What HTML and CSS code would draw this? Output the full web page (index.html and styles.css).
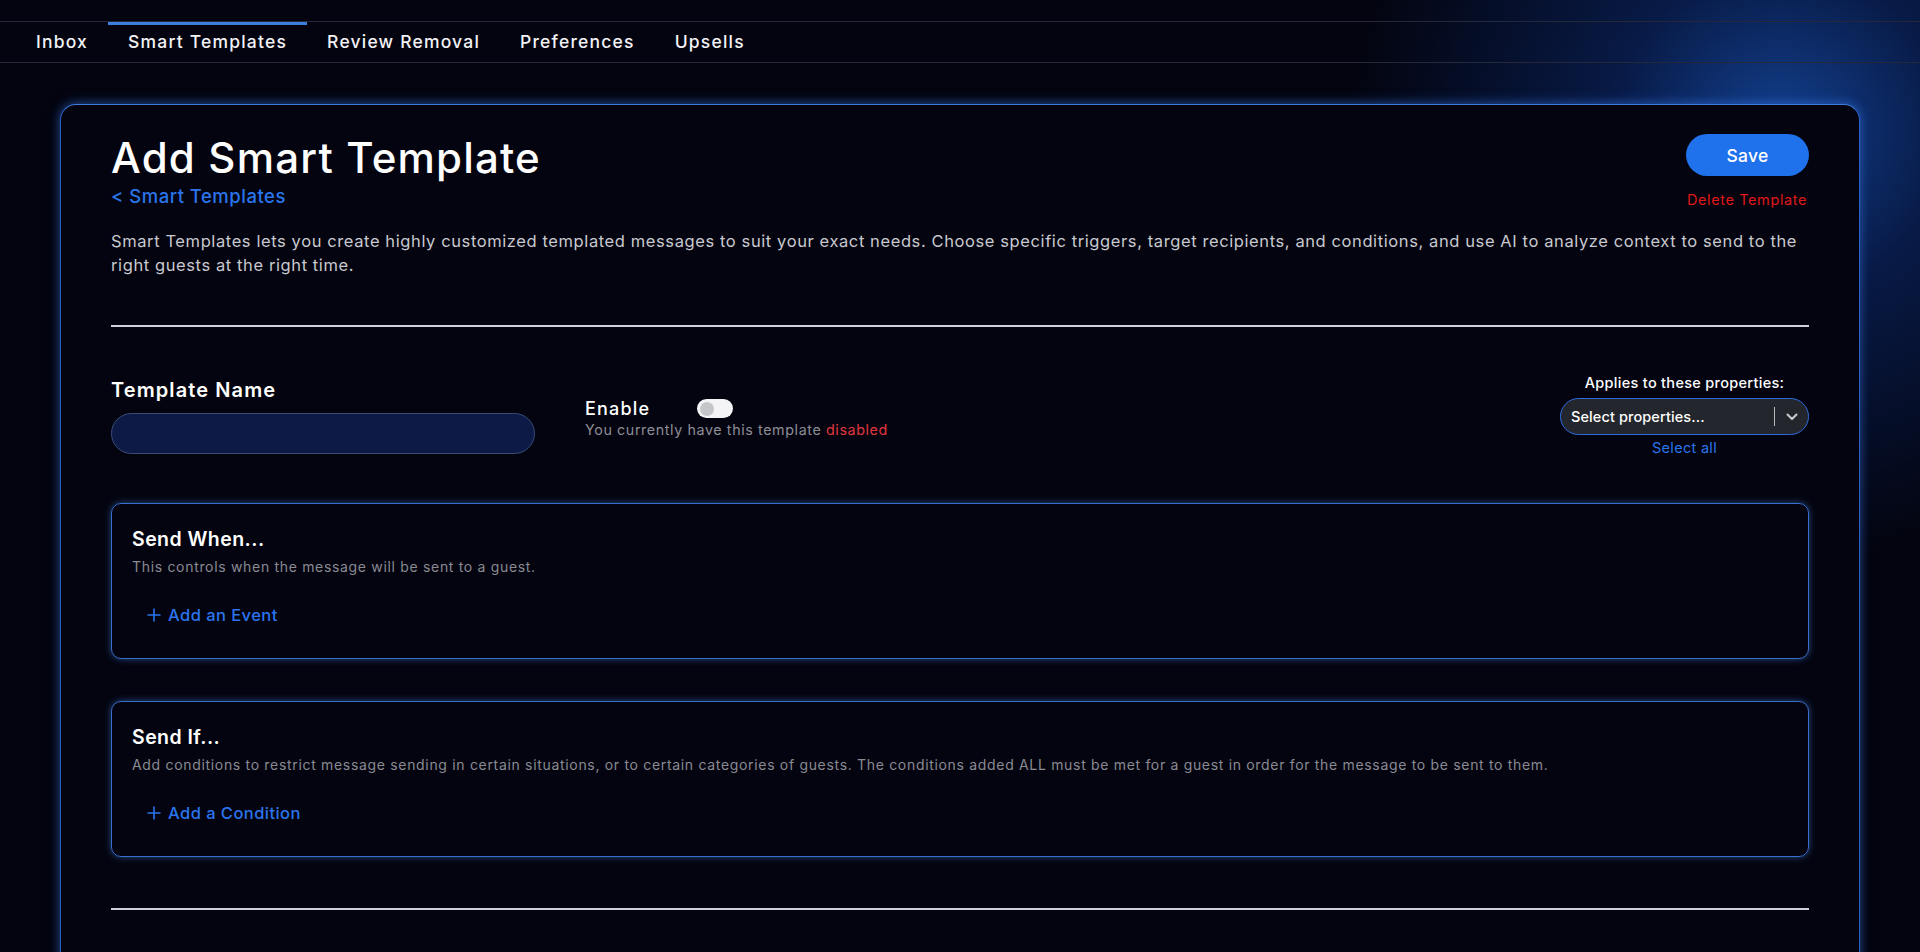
FILE: index.html
```html
<!DOCTYPE html>
<html lang="en">
<head>
<meta charset="utf-8">
<title>Add Smart Template</title>
<link rel="stylesheet" href="styles.css">
</head>
<body>
<div class="topspace"></div>
<nav class="tabs">
  <a class="tab">Inbox</a>
  <a class="tab active">Smart Templates</a>
  <a class="tab">Review Removal</a>
  <a class="tab">Preferences</a>
  <a class="tab">Upsells</a>
</nav>
<main class="card">
  <header class="card-head">
    <div class="head-left">
      <h1 class="title">Add Smart Template</h1>
      <a class="back">&lt; Smart Templates</a>
    </div>
    <div class="head-right">
      <button class="save">Save</button>
      <a class="delete">Delete Template</a>
    </div>
  </header>
  <p class="intro">Smart Templates lets you create highly customized templated messages to suit your exact needs. Choose specific triggers, target recipients, and conditions, and use AI to analyze context to send to the right guests at the right time.</p>
  <hr class="sep">
  <section class="form-row">
    <div class="name-col">
      <label class="field-label">Template Name</label>
      <div class="name-input"></div>
    </div>
    <div class="enable-col">
      <div class="enable-line">
        <span class="enable-label">Enable</span>
        <span class="toggle"><span class="knob"></span></span>
      </div>
      <div class="status">You currently have this template <span class="status-off">disabled</span></div>
    </div>
    <div class="props-col">
      <div class="props-label">Applies to these properties:</div>
      <div class="select">
        <span class="select-text">Select properties...</span>
        <span class="select-sep"></span>
        <svg class="chev" width="12" height="8" viewBox="0 0 12 8"><path d="M1.5 1.5 L6 6 L10.5 1.5" fill="none" stroke="#c9cacf" stroke-width="2" stroke-linecap="round" stroke-linejoin="round"/></svg>
      </div>
      <a class="select-all">Select all</a>
    </div>
  </section>
  <section class="rule-box">
    <h2 class="rule-title">Send When...</h2>
    <p class="rule-desc">This controls when the message will be sent to a guest.</p>
    <a class="rule-add"><svg class="plus" width="14" height="14" viewBox="0 0 14 14"><path d="M7 1 V13 M1 7 H13" stroke="#2b74ee" stroke-width="1.6" stroke-linecap="round"/></svg>Add an Event</a>
  </section>
  <section class="rule-box second">
    <h2 class="rule-title">Send If...</h2>
    <p class="rule-desc">Add conditions to restrict message sending in certain situations, or to certain categories of guests. The conditions added ALL must be met for a guest in order for the message to be sent to them.</p>
    <a class="rule-add"><svg class="plus" width="14" height="14" viewBox="0 0 14 14"><path d="M7 1 V13 M1 7 H13" stroke="#2b74ee" stroke-width="1.6" stroke-linecap="round"/></svg>Add a Condition</a>
  </section>
  <hr class="sep last">
</main>
</body>
</html>
```
FILE: styles.css
```css
* { box-sizing: border-box; }
html, body { height: 100%; }
body {
  margin: 0;
  background-color: #03040f;
  background-image: radial-gradient(circle at 1780px 130px, rgba(28, 100, 220, 0.62) 0, rgba(16, 64, 165, 0.36) 170px, rgba(6, 20, 60, 0) 430px);
  background-repeat: no-repeat;
  font-family: Inter, "Open Sans", sans-serif;
  color: #ffffff;
  overflow: hidden;
}
.topspace { height: 21px; }
.tabs {
  display: flex;
  height: 42px;
  padding-left: 16px;
  border-top: 1px solid #25283a;
  border-bottom: 1px solid #25283a;
}
.tab {
  display: flex;
  align-items: center;
  padding: 0 20px 5px;
  font-size: 17.5px;
  font-weight: 500;
  color: #f2f2f6;
  border-top: 3px solid transparent;
  letter-spacing: 1.2px;
}
.tab.active { border-top-color: #3d7fdc; }

.card {
  margin: 41px 60px 0;
  padding: 29px 50px 60px;
  border: 1px solid #2c5fc4;
  border-top-color: #3f7ade;
  border-radius: 16px 16px 0 0;
  background: #03040f;
  box-shadow: 0 0 10px rgba(58, 120, 230, 0.45), 0 -2px 14px rgba(58, 120, 230, 0.25);
  min-height: 900px;
}
.card-head {
  display: flex;
  justify-content: space-between;
  align-items: flex-start;
  height: 76px;
}
.head-left { display: flex; flex-direction: column; }
.title {
  margin: 0;
  font-size: 42px;
  line-height: 48px;
  font-weight: 500;
  letter-spacing: 1.2px;
}
.back {
  margin-top: 2px;
  font-size: 18.5px;
  line-height: 24px;
  color: #2a74ec;
  font-weight: 500;
  letter-spacing: 0.5px;
}
.head-right { display: flex; flex-direction: column; align-items: flex-end; }
.save {
  width: 123px;
  height: 42px;
  border: none;
  border-radius: 21px;
  background: #1f71ec;
  color: #ffffff;
  font-family: inherit;
  font-size: 17.5px;
  font-weight: 500;
  letter-spacing: 0.3px;
}
.delete {
  margin-top: 14px;
  margin-right: 2px;
  font-size: 14.5px;
  line-height: 20px;
  color: #e01818;
  letter-spacing: 0.6px;
}
.intro {
  margin: 19px 0 0;
  font-size: 16.5px;
  line-height: 24px;
  color: #c9c9d0;
  letter-spacing: 0.6px;
}
.sep {
  margin: 48px 0 0;
  height: 2px;
  border: none;
  background: #cfd0da;
}
.sep.last { margin-top: 51px; }

.form-row {
  display: flex;
  align-items: flex-start;
  margin-top: 46px;
}
.name-col { display: flex; flex-direction: column; padding-top: 5px; width: 424px; }
.field-label {
  font-size: 20px;
  line-height: 24px;
  font-weight: 600;
  letter-spacing: 1.1px;
}
.name-input {
  margin-top: 11px;
  height: 41px;
  border-radius: 21px;
  background: #0c1a45;
  border: 1px solid #3a4c78;
}
.enable-col { margin-left: 50px; padding-top: 24px; }
.enable-line { display: flex; align-items: center; height: 23px; }
.enable-label {
  width: 112px;
  font-size: 18px;
  font-weight: 500;
  letter-spacing: 1.2px;
}
.toggle {
  display: flex;
  align-items: center;
  width: 36px;
  height: 19px;
  padding: 0 3px;
  border-radius: 10px;
  background: #f4f4f6;
}
.knob { width: 14px; height: 14px; border-radius: 50%; background: #c5c6ca; }
.status {
  font-size: 14.3px;
  line-height: 20px;
  color: #8d8d96;
  letter-spacing: 0.6px;
}
.status-off { color: #e3363e; }

.props-col {
  margin-left: auto;
  width: 249px;
  display: flex;
  flex-direction: column;
  align-items: center;
}
.props-label {
  font-size: 14.5px;
  line-height: 20px;
  font-weight: 500;
  letter-spacing: 0.3px;
}
.select {
  margin-top: 5px;
  width: 249px;
  height: 37px;
  display: flex;
  align-items: center;
  padding: 0 10px 0 10px;
  border-radius: 19px;
  background: #23262c;
  border: 1px solid #2d6be0;
}
.select-text { font-size: 14.5px; font-weight: 500; flex: 1; letter-spacing: 0.1px; }
.select-sep { width: 1px; height: 19px; background: #b9bac0; margin-right: 11px; }
.chev { display: block; }
.select-all {
  margin-top: 3px;
  font-size: 14.5px;
  line-height: 20px;
  color: #2a74ec;
  letter-spacing: 0.3px;
}

.rule-box {
  margin-top: 45px;
  padding: 23px 20px 31px;
  border: 1px solid #3a6fcc;
  border-radius: 10px;
  box-shadow: 0 0 7px rgba(70, 130, 230, 0.55);
}
.rule-box.second { margin-top: 42px; }
.rule-title {
  margin: 0;
  font-size: 19.5px;
  line-height: 24px;
  font-weight: 600;
  letter-spacing: 0.45px;
}
.rule-desc {
  margin: 6px 0 0;
  font-size: 14px;
  line-height: 20px;
  color: #8a8a93;
  letter-spacing: 0.68px;
}
.rule-add {
  display: flex;
  align-items: center;
  gap: 7px;
  margin-top: 26px;
  padding-left: 15px;
  font-size: 16.5px;
  line-height: 24px;
  font-weight: 500;
  color: #2b74ee;
  letter-spacing: 0.45px;
}
.plus { display: block; }
```
